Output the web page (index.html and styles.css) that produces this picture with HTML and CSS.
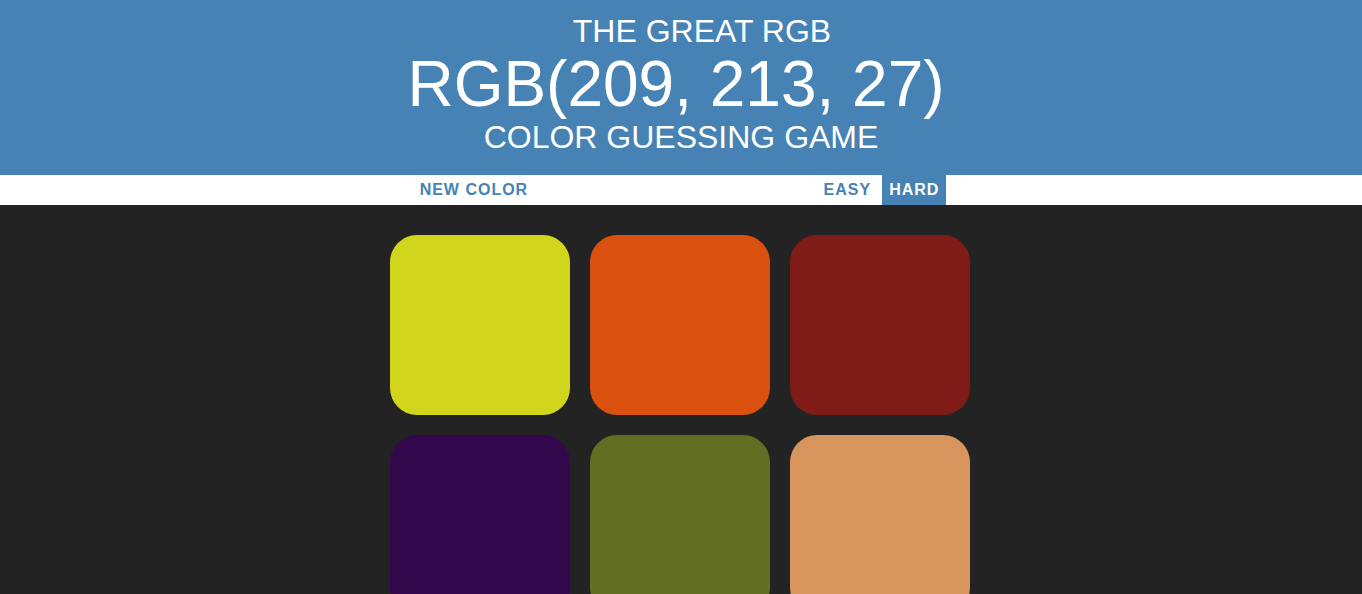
FILE: index.html
```html
<!DOCTYPE html>
<html>
<head>
<meta charset="utf-8">
<title>Color Game</title>
<link rel="stylesheet" href="styles.css">
</head>
<body>
<h1 class="title">
  <span class="line line-top">The Great RGB</span>
  <span class="line color-display">RGB(209, 213, 27)</span>
  <span class="line">Color Guessing Game</span>
</h1>
<div class="stripe">
  <button class="btn btn-new">New Color</button>
  <span class="message"></span>
  <button class="btn">Easy</button>
  <button class="btn selected">Hard</button>
</div>
<div class="container">
  <div class="square sq1"></div>
  <div class="square sq2"></div>
  <div class="square sq3"></div>
  <div class="square sq4"></div>
  <div class="square sq5"></div>
  <div class="square sq6"></div>
</div>
</body>
</html>
```
FILE: styles.css
```css
body {
  margin: 0;
  background: #232323;
  font-family: "Liberation Sans", Arial, sans-serif;
}
.title {
  margin: 0;
  padding: 14px 0 20px;
  text-align: center;
  line-height: 1.1;
  font-size: 32px;
  font-weight: normal;
  color: #fff;
  background: steelblue;
  text-transform: uppercase;
}
.line {
  display: block;
}
.line-top {
  padding-left: 42px;
}
.color-display {
  font-size: 200%;
  padding-right: 10px;
}
.stripe {
  background: #fff;
  height: 30px;
  display: flex;
  justify-content: center;
  gap: 4px;
}
.message {
  width: 20%;
}
.btn {
  border: none;
  background: none;
  text-transform: uppercase;
  height: 100%;
  font-family: "Liberation Sans", Arial, sans-serif;
  font-weight: 700;
  font-size: 16px;
  color: steelblue;
  letter-spacing: 1px;
  padding: 1px 7px;
  margin: 0;
}
.btn-new {
  padding: 1px 8px 1px 4px;
}
.btn.selected {
  background: steelblue;
  color: #fff;
}
.container {
  max-width: 600px;
  margin: 20px auto;
  padding-right: 2px;
  display: flex;
  flex-wrap: wrap;
}
.square {
  width: 30%;
  padding-bottom: 30%;
  margin: 1.66%;
  border-radius: 15%;
}
.sq1 { background: rgb(209, 213, 27); }
.sq2 { background: rgb(217, 80, 15); }
.sq3 { background: rgb(128, 28, 24); }
.sq4 { background: rgb(52, 8, 76); }
.sq5 { background: rgb(98, 110, 33); }
.sq6 { background: rgb(216, 150, 94); }
```
